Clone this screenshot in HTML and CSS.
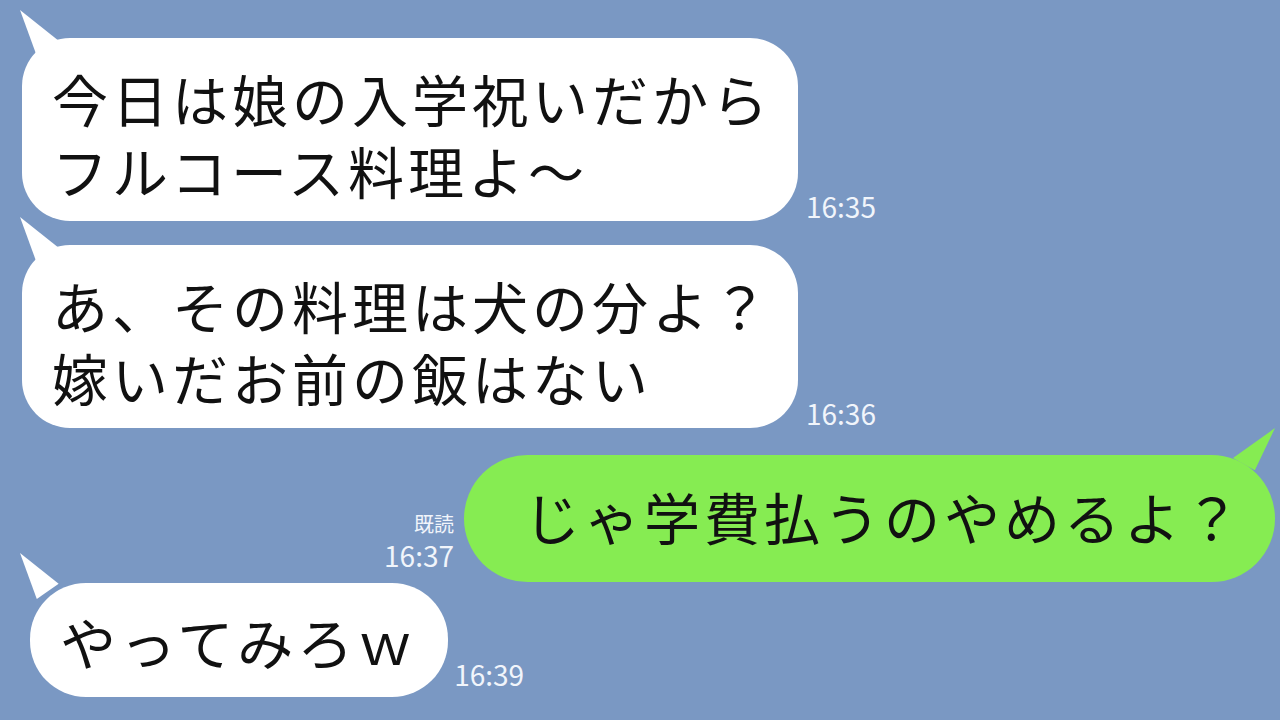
FILE: index.html
```html
<!DOCTYPE html>
<html lang="ja">
  <head>
    <meta charset="UTF-8" />
    <meta name="viewport" content="width=device-width, initial-scale=1.0" />
    <title>トーク</title>
    <link rel="stylesheet" href="styles.css">
  </head>

  <body>
    <main class="chat">
      <!-- 相手 -->
      <div class="row row-left row-first">
        <div class="bubble bubble-white">
          <span class="line">今日は娘の入学祝いだから</span>
          <span class="line">フルコース料理よ～</span>
        </div>
        <span class="time">16:35</span>
      </div>

      <div class="row row-left row-second">
        <div class="bubble bubble-white">
          <span class="line">あ、その料理は犬の分よ？</span>
          <span class="line">嫁いだお前の飯はない</span>
        </div>
        <span class="time">16:36</span>
      </div>

      <!-- 自分 -->
      <div class="row row-right">
        <div class="meta">
          <span class="read">既読</span>
          <span class="time">16:37</span>
        </div>
        <div class="bubble bubble-green">じゃ学費払うのやめるよ？</div>
      </div>

      <div class="row row-left row-last">
        <div class="bubble bubble-white bubble-short">やってみろｗ</div>
        <span class="time">16:39</span>
      </div>
    </main>
  </body>
</html>
```

FILE: styles.css
```css
* {
  margin: 0;
  padding: 0;
  box-sizing: border-box;
}

body {
  font-family: "Noto Sans CJK JP", "Noto Sans", sans-serif;
  background: #7a98c3;
  width: 1280px;
  height: 720px;
  overflow: hidden;
}

.chat {
  display: flex;
  flex-direction: column;
  padding-top: 38px;
}

.row {
  display: flex;
  align-items: flex-end;
}

.row-left {
  padding-left: 22px;
}

.row-second {
  margin-top: 24px;
}

.row-right {
  justify-content: flex-end;
  padding-right: 5px;
  margin-top: 27px;
}

.row-last {
  padding-left: 30px;
  margin-top: 1px;
}

.bubble {
  position: relative;
  font-size: 56px;
  line-height: 72px;
  letter-spacing: 4px;
  color: #111;
  border-radius: 48px;
}

.line {
  display: block;
  height: 72px;
  white-space: nowrap;
}

.bubble-white {
  background: #fff;
  padding: 24px 26px 15px 30px;
}

.bubble-white::before {
  content: "";
  position: absolute;
  left: -2px;
  top: -28px;
  width: 42px;
  height: 48px;
  background: #fff;
  clip-path: polygon(0 0, 92% 64%, 40% 96%);
}

.bubble-short {
  padding: 22px 31px 20px 30px;
  border-radius: 56px;
}

.bubble-short::before {
  left: -10px;
  top: -30px;
}

.bubble-green {
  background: #86ec52;
  padding: 25px 31px 30px 60px;
  border-radius: 64px;
}

.bubble-green::after {
  content: "";
  position: absolute;
  right: 0;
  top: -27px;
  width: 42px;
  height: 44px;
  background: #86ec52;
  clip-path: polygon(100% 0, 0 68%, 52% 96%);
}

.time {
  color: #f1f5fb;
  font-size: 28px;
  line-height: 30px;
  margin-left: 8px;
}

.row-last .time {
  margin-left: 6px;
  margin-bottom: 8px;
}

.meta {
  display: flex;
  flex-direction: column;
  align-items: flex-end;
  margin-right: 10px;
  margin-bottom: 12px;
}

.meta .time {
  margin-left: 0;
}

.read {
  color: #f1f5fb;
  font-size: 20px;
  line-height: 24px;
  margin-bottom: 4px;
}
```
